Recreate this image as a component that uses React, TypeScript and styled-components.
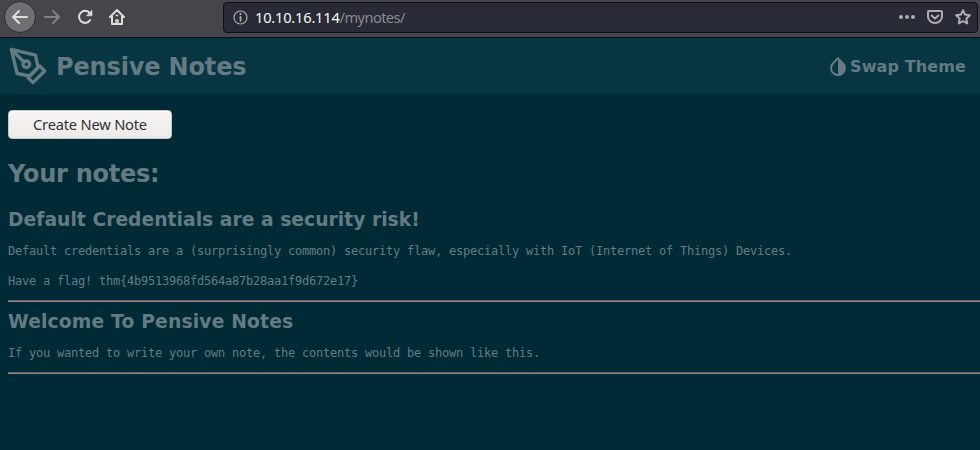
import React from "react";
import styled, { createGlobalStyle } from "styled-components";

const GlobalStyle = createGlobalStyle`
  * { box-sizing: border-box; }
  body {
    margin: 0;
    background: #002b36;
    color: #657b83;
    font-family: "DejaVu Sans", sans-serif;
    overflow: hidden;
  }
  svg { display: block; flex: none; }
`;

const Window = styled.div`
  height: 450px;
  display: flex;
  flex-direction: column;
`;

const Toolbar = styled.div`
  flex: none;
  height: 38px;
  display: flex;
  align-items: flex-start;
  background: #45464b;
  border-bottom: 1px solid #0e0f12;
`;

const Navigation = styled.nav`
  display: flex;
  gap: 0.4px;
  width: 223px;
  padding: 1px 0 0 4px;
`;

const NavButton = styled.button<{ $circle?: boolean; $dim?: boolean }>`
  width: 32px;
  height: 32px;
  padding: 0;
  border: 1px solid ${(p) => (p.$circle ? "#2c2d30" : "transparent")};
  border-radius: 50%;
  background: ${(p) => (p.$circle ? "#6f7073" : "none")};
  color: ${(p) => (p.$dim ? "#828387" : "#dededb")};
  display: flex;
  align-items: center;
  justify-content: center;
`;

const AddressBar = styled.div`
  width: 755px;
  height: 31px;
  margin-top: 2px;
  padding: 0 6px 0 9px;
  display: flex;
  align-items: center;
  border: 1px solid #0e0f13;
  border-radius: 4px;
  background: #282a35;
  color: #adaeb0;
`;

const Address = styled.span`
  flex: 1;
  margin-left: 7px;
  padding-bottom: 1px;
  color: #898a90;
  font: 14.67px/20px "Noto Sans", sans-serif;
  letter-spacing: -0.6px;
`;

const Host = styled.span`
  color: #f9f9fa;
  letter-spacing: -0.22px;
`;

const AddressActions = styled.div`
  display: flex;
  gap: 12px;
  margin-top: -1px;
`;

const SiteHeader = styled.header`
  flex: none;
  height: 56px;
  padding: 2px 14px 0 8px;
  display: flex;
  align-items: center;
  justify-content: space-between;
  background: #073642;
`;

const Brand = styled.div`
  display: flex;
  align-items: center;
  gap: 8px;
  svg { margin-top: -2px; }
`;

const Title = styled.h1`
  margin: 0;
  font-size: 24px;
  line-height: 28px;
  letter-spacing: -0.15px;
`;

const ThemeSwitch = styled.div`
  display: flex;
  align-items: center;
  gap: 4px;
  font-size: 16px;
  line-height: 20px;
  font-weight: bold;
  letter-spacing: 0.12px;
  svg { margin-top: -2px; }
`;

const Content = styled.main`
  padding: 16px 0 0 8px;
`;

const CreateButton = styled.button`
  display: block;
  width: 164px;
  height: 29px;
  padding: 0;
  border: 1px solid #cdc7c2;
  border-radius: 4px;
  background: linear-gradient(#f6f5f3, #edebe9);
  box-shadow: inset 0 1px #fff;
  color: #2e3436;
  font: 14.67px/25px "Noto Sans", sans-serif;
  letter-spacing: -0.2px;
`;

const SectionTitle = styled.h2`
  margin: 21px 0 0;
  font-size: 24px;
  line-height: 28px;
  letter-spacing: -0.25px;
`;

const Note = styled.article<{ $first?: boolean }>`
  padding-top: ${(p) => (p.$first ? 21 : 9)}px;
`;

const NoteTitle = styled.h3<{ $spacing: number }>`
  margin: 0;
  font-size: 18.72px;
  line-height: 22px;
  letter-spacing: ${(p) => p.$spacing}px;
`;

const NoteBody = styled.pre`
  margin: 13px 0 11px;
  font: 12px/15px "DejaVu Sans Mono", monospace;
  letter-spacing: -0.224px;
`;

const Divider = styled.hr`
  height: 2px;
  margin: 0;
  border: 0;
  border-top: 1px solid #656360;
  border-bottom: 1px solid #8c8986;
`;

const NOTES = [
  {
    title: "Default Credentials are a security risk!",
    spacing: 0.03,
    body: "Default credentials are a (surprisingly common) security flaw, especially with IoT (Internet of Things) Devices.\n\nHave a flag! thm{4b9513968fd564a87b28aa1f9d672e17}",
  },
  {
    title: "Welcome To Pensive Notes",
    spacing: 0.17,
    body: "If you wanted to write your own note, the contents would be shown like this.",
  },
];

const line = {
  fill: "none",
  stroke: "currentColor",
  strokeWidth: 2,
  strokeLinecap: "round" as const,
  strokeLinejoin: "round" as const,
};

const BackIcon = () => (
  <svg width="16" height="16" viewBox="0 0 16 16" {...line}>
    <path d="M15 8H1.5M7 2L1 8l6 6" />
  </svg>
);

const ForwardIcon = () => (
  <svg width="16" height="16" viewBox="0 0 16 16" {...line}>
    <path d="M1 8h13.5M9 2l6 6-6 6" />
  </svg>
);

const ReloadIcon = () => (
  <svg width="16" height="16" viewBox="0 0 16 16" {...line}>
    <path d="M12.5 3.8A6 6 0 1 0 13.2 11" />
    <path d="M15 1.5v5.3H9.7z" fill="currentColor" strokeWidth="0.6" />
  </svg>
);

const HomeIcon = () => (
  <svg width="16" height="16" viewBox="0 0 16 16" {...line}>
    <path d="M1 8l7-7 7 7M3 7v8h10V7" />
    <path d="M7 15v-4h2v4M7.4 6.5h1.2" strokeWidth="1.5" />
  </svg>
);

const InfoIcon = () => (
  <svg width="15" height="15" viewBox="0 0 15 15" fill="none" stroke="currentColor">
    <circle cx="7.5" cy="7.5" r="6.5" strokeWidth="1.2" />
    <path d="M7.5 6.8V10.8" strokeWidth="1.8" strokeLinecap="round" />
    <circle cx="7.5" cy="4.1" r="1.1" fill="currentColor" stroke="none" />
  </svg>
);

const MoreIcon = () => (
  <svg width="16" height="16" viewBox="0 0 16 16" fill="currentColor">
    <circle cx="2" cy="8" r="2" />
    <circle cx="8" cy="8" r="2" />
    <circle cx="14" cy="8" r="2" />
  </svg>
);

const PocketIcon = () => (
  <svg width="16" height="16" viewBox="0 0 16 16" {...line}>
    <path d="M2 2h12a1 1 0 0 1 1 1v4.5a7 6.5 0 0 1-14 0V3a1 1 0 0 1 1-1z" />
    <path d="M4.6 6.4L8 9.6l3.4-3.2" />
  </svg>
);

const StarIcon = () => (
  <svg width="16" height="16" viewBox="0 0 16 16" {...line}>
    <path d="M8 1.2l2 4.4 4.9.6-3.6 3.3.9 4.9L8 12.2l-4.2 2.2.9-4.9-3.6-3.3 4.9-.6z" />
  </svg>
);

const PenIcon = () => (
  <svg width="40" height="40" viewBox="0 0 24 24" {...line}>
    <path d="M12 19l7-7 3 3-7 7-3-3z" />
    <path d="M18 13l-1.5-7.5L2 2l3.5 14.5L13 18l5-5zM2 2l7.586 7.586" />
    <circle cx="11" cy="11" r="2" />
  </svg>
);

const DropIcon = () => (
  <svg width="16" height="19" viewBox="4 2.2 16 19.4" fill="currentColor">
    <path d="M17.66 7.93L12 2.27 6.34 7.93c-3.12 3.12-3.12 8.19 0 11.31C7.9 20.8 9.95 21.58 12 21.58c2.05 0 4.1-.78 5.66-2.34 3.12-3.12 3.12-8.19 0-11.31zM12 19.59c-1.6 0-3.11-.62-4.24-1.76C6.62 16.69 6 15.19 6 13.59s.62-3.11 1.76-4.24L12 5.1v14.49z" />
  </svg>
);

export default function App() {
  return (
    <Window>
      <GlobalStyle />
      <Toolbar>
        <Navigation>
          <NavButton $circle aria-label="Back"><BackIcon /></NavButton>
          <NavButton $dim aria-label="Forward"><ForwardIcon /></NavButton>
          <NavButton aria-label="Reload"><ReloadIcon /></NavButton>
          <NavButton aria-label="Home"><HomeIcon /></NavButton>
        </Navigation>
        <AddressBar>
          <InfoIcon />
          <Address><Host>10.10.16.114</Host>/mynotes/</Address>
          <AddressActions>
            <MoreIcon />
            <PocketIcon />
            <StarIcon />
          </AddressActions>
        </AddressBar>
      </Toolbar>
      <SiteHeader>
        <Brand>
          <PenIcon />
          <Title>Pensive Notes</Title>
        </Brand>
        <ThemeSwitch>
          <DropIcon />
          Swap Theme
        </ThemeSwitch>
      </SiteHeader>
      <Content>
        <CreateButton>Create New Note</CreateButton>
        <SectionTitle>Your notes:</SectionTitle>
        {NOTES.map((note, i) => (
          <Note key={note.title} $first={i === 0}>
            <NoteTitle $spacing={note.spacing}>{note.title}</NoteTitle>
            <NoteBody>{note.body}</NoteBody>
            <Divider />
          </Note>
        ))}
      </Content>
    </Window>
  );
}
